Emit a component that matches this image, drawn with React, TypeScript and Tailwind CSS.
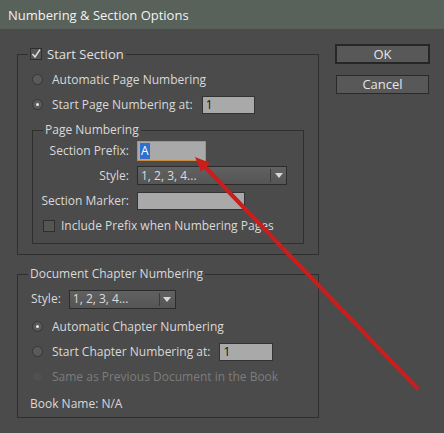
import React from "react";

function Radio({ on = false, disabled = false }: { on?: boolean; disabled?: boolean }) {
  return (
    <span
      className={`flex h-[11px] w-[11px] shrink-0 items-center justify-center rounded-full border ${
        disabled ? "border-[#4a4a4a] bg-[#505050]" : "border-[#353535] bg-[#5a5a5a]"
      }`}
    >
      {on && <span className="h-[3px] w-[3px] rounded-full bg-[#e8e8e8]" />}
    </span>
  );
}

function Checkbox({ on = false }: { on?: boolean }) {
  return (
    <span className="flex h-[12px] w-[12px] shrink-0 items-center justify-center border border-[#2e2e2e] bg-[#555555]">
      {on && (
        <svg width="10" height="10" viewBox="0 0 10 10">
          <path d="M1.5 5 L4 8 L9 0.5" stroke="#e0e0e0" strokeWidth="1.4" fill="none" />
        </svg>
      )}
    </span>
  );
}

function Dropdown({ width, value }: { width: string; value: string }) {
  return (
    <div
      className={`flex h-[19px] items-center border border-[#2c2c2c] bg-gradient-to-b from-[#616161] to-[#555555] ${width}`}
    >
      <span className="flex-1 pl-[3px] text-[#dcdcdc]">{value}</span>
      <span className="h-[13px] w-px bg-[#3a3a3a]" />
      <span className="flex w-[15px] justify-center">
        <svg width="8" height="5" viewBox="0 0 8 5">
          <path d="M0 0 L8 0 L4 5 Z" fill="#d8d8d8" />
        </svg>
      </span>
    </div>
  );
}

function Field({ width, value }: { width: string; value?: string }) {
  return (
    <div className={`flex h-[18px] items-center border border-[#333333] bg-[#a9a9a9] pl-[3px] text-[#111] ${width}`}>
      {value}
    </div>
  );
}

export default function App() {
  return (
    <div className="relative h-[433px] w-[444px] overflow-hidden bg-[#4b4b4b] font-['Open_Sans',sans-serif] text-[12px] leading-[16px] text-[#d9d9d9]">
      {/* title bar */}
      <div className="flex h-[29px] items-center bg-[#58615a] pl-2 text-[13px] text-[#f2f2f2]">
        Numbering &amp; Section Options
      </div>

      <div className="flex">
        {/* left column */}
        <div className="ml-[17px] mt-[17px] w-[302px]">
          <fieldset className="border border-[#2f2f2f] pb-[10px]">
            <legend className="ml-[10px] px-[2px]">
              <span className="flex h-[16px] items-center gap-[5px]">
                <Checkbox on />
                <span className="text-[13px] text-[#e0e0e0]">Start Section</span>
              </span>
            </legend>

            <div className="mt-[5px] flex h-[25px] items-center gap-[9px] pl-[14px]">
              <Radio />
              <span>Automatic Page Numbering</span>
            </div>
            <div className="flex h-[25px] items-center gap-[9px] pl-[14px]">
              <Radio on />
              <span>Start Page Numbering at:</span>
              <Field width="w-[53px]" value="1" />
            </div>

            <fieldset className="ml-[14px] mr-[14px] mt-[5px] border border-[#2f2f2f] pb-[5px]">
              <legend className="ml-[10px] px-[2px]">Page Numbering</legend>
              <div className="flex h-[25px] items-center">
                <span className="w-[96px] text-right">Section Prefix:</span>
                <div className="ml-[8px] flex h-[20px] w-[69px] items-center border border-[#c98a3e] bg-[#a9a9a9] pl-[2px]">
                  <span className="bg-[#2f6fce] px-[1px] text-white">A</span>
                </div>
              </div>
              <div className="flex h-[25px] items-center">
                <span className="w-[96px] text-right">Style:</span>
                <div className="ml-[8px]">
                  <Dropdown width="w-[150px]" value="1, 2, 3, 4..." />
                </div>
              </div>
              <div className="flex h-[25px] items-center">
                <span className="w-[96px] text-right">Section Marker:</span>
                <div className="ml-[8px]">
                  <Field width="w-[108px]" />
                </div>
              </div>
              <div className="flex h-[25px] items-center gap-[6px] pl-[10px]">
                <Checkbox />
                <span>Include Prefix when Numbering Pages</span>
              </div>
            </fieldset>
          </fieldset>

          <fieldset className="mt-[11px] border border-[#2f2f2f] pb-[1px]">
            <legend className="ml-[10px] px-[2px]">Document Chapter Numbering</legend>
            <div className="mt-[5px] flex h-[24px] items-center gap-[8px] pl-[13px]">
              <span>Style:</span>
              <Dropdown width="w-[107px]" value="1, 2, 3, 4..." />
            </div>
            <div className="mt-[3px] flex h-[25px] items-center gap-[9px] pl-[14px]">
              <Radio on />
              <span>Automatic Chapter Numbering</span>
            </div>
            <div className="flex h-[25px] items-center gap-[9px] pl-[14px]">
              <Radio />
              <span>Start Chapter Numbering at:</span>
              <Field width="w-[54px]" value="1" />
            </div>
            <div className="flex h-[25px] items-center gap-[9px] pl-[14px] text-[#7c7c7c]">
              <Radio disabled />
              <span>Same as Previous Document in the Book</span>
            </div>
            <div className="mt-[2px] flex h-[25px] items-center pl-[12px]">Book Name: N/A</div>
          </fieldset>
        </div>

        {/* buttons */}
        <div className="ml-[16px] mt-[15px] flex w-[95px] flex-col items-center gap-[11px]">
          <button className="h-[20px] w-[95px] border-2 border-[#262626] bg-[#585858] text-[13px] leading-[14px] text-[#e6e6e6]">
            OK
          </button>
          <button className="h-[19px] w-[93px] border border-[#2a2a2a] bg-[#585858] text-[13px] leading-[15px] text-[#e6e6e6]">
            Cancel
          </button>
        </div>
      </div>

      {/* red annotation arrow */}
      <svg className="pointer-events-none absolute inset-0" width="444" height="433" viewBox="0 0 444 433">
        <line x1="417" y1="388" x2="204" y2="166" stroke="#c81e1e" strokeWidth="4" strokeLinecap="round" />
        <polygon points="195,157 210,163 201,172" fill="#c81e1e" />
      </svg>
    </div>
  );
}
